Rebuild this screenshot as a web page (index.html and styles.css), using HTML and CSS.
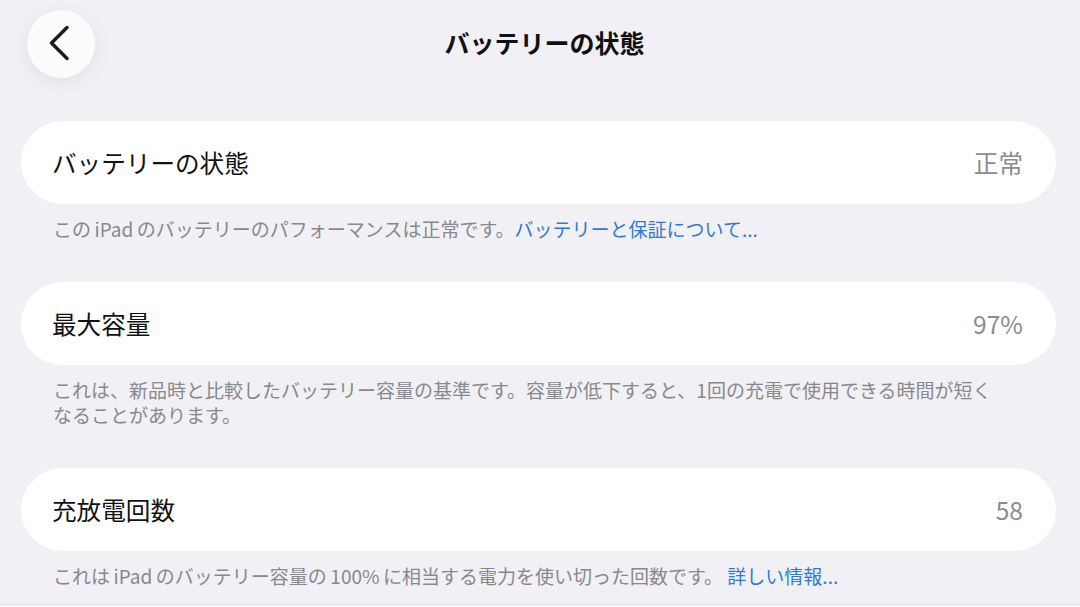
FILE: index.html
```html
<!DOCTYPE html>
<html lang="ja">
<head>
    <meta charset="UTF-8">
    <meta name="viewport" content="width=device-width, initial-scale=1.0">
    <title>バッテリーの状態</title>
    <link rel="stylesheet" href="styles.css">
</head>
<body>
    <header class="nav">
        <div class="nav-left">
            <button class="back-btn" aria-label="戻る">
                <svg width="68" height="68" viewBox="0 0 68 68">
                    <path d="M40 17.5 L24.5 33 L40 48.5" fill="none" stroke="#1c1c1e" stroke-width="3.5" stroke-linecap="round" stroke-linejoin="round"/>
                </svg>
            </button>
        </div>
        <h1 class="nav-title">バッテリーの状態</h1>
        <div class="nav-right"></div>
    </header>

    <main class="list">
        <section class="group">
            <div class="cell">
                <span class="cell-label">バッテリーの状態</span>
                <span class="cell-value">正常</span>
            </div>
            <p class="group-footer">この<span class="latin">iPad</span>のバッテリーのパフォーマンスは正常です。<a href="#" class="link">バッテリーと保証について...</a></p>
        </section>

        <section class="group">
            <div class="cell">
                <span class="cell-label">最大容量</span>
                <span class="cell-value">97%</span>
            </div>
            <p class="group-footer">これは、新品時と比較したバッテリー容量の基準です。容量が低下すると、1回の充電で使用できる時間が短くなることがあります。</p>
        </section>

        <section class="group">
            <div class="cell">
                <span class="cell-label">充放電回数</span>
                <span class="cell-value">58</span>
            </div>
            <p class="group-footer">これは<span class="latin">iPad</span>のバッテリー容量の<span class="latin">100%</span>に相当する電力を使い切った回数です。 <a href="#" class="link">詳しい情報...</a></p>
        </section>
    </main>
    <div class="bottom-edge"></div>
</body>
</html>
```

FILE: styles.css
```css
* { box-sizing: border-box; }
html, body { margin: 0; padding: 0; }
body { width: 1080px; height: 607px; overflow: hidden; position: relative; background-color: #f1f0f5; font-family: "Noto Sans CJK JP", "Noto Sans", sans-serif; color: #111113; }

.nav { display: grid; grid-template-columns: 1fr auto 1fr; align-items: center; padding: 10px 18px 0 27px; height: 78px; }
.nav-left { display: flex; align-items: center; }
.back-btn { width: 68px; height: 68px; border-radius: 50%; border: none; padding: 0; background: #fbfbfd; box-shadow: 0 4px 18px rgba(0, 0, 0, 0.07); display: flex; align-items: center; justify-content: center; cursor: pointer; }
.back-btn svg { display: block; }
.nav-title { margin: 0 0 4px 0; font-size: 25px; font-weight: 700; color: #111113; }

.list { padding: 43px 24px 0 21px; }
.group { margin: 0; }
.cell { display: flex; align-items: center; justify-content: space-between; height: 83px; padding: 0 33px 0 31px; background: #ffffff; border-radius: 42px; }
.cell-label { font-size: 24.6px; line-height: 1; color: #111113; }
.cell-value { font-size: 24.6px; line-height: 1; color: #8b8b90; }

.group-footer { margin: 0; padding: 12px 52px 41px 32px; font-size: 19px; line-height: 25px; color: #88888d; }
.latin { margin: 0 3.5px; }
.link { color: #2f7bd3; text-decoration: none; }

.bottom-edge { position: absolute; left: 0; right: 0; bottom: 0; height: 3px; background: #f7f7f9; border-top: 1px solid #dedee3; }
```
